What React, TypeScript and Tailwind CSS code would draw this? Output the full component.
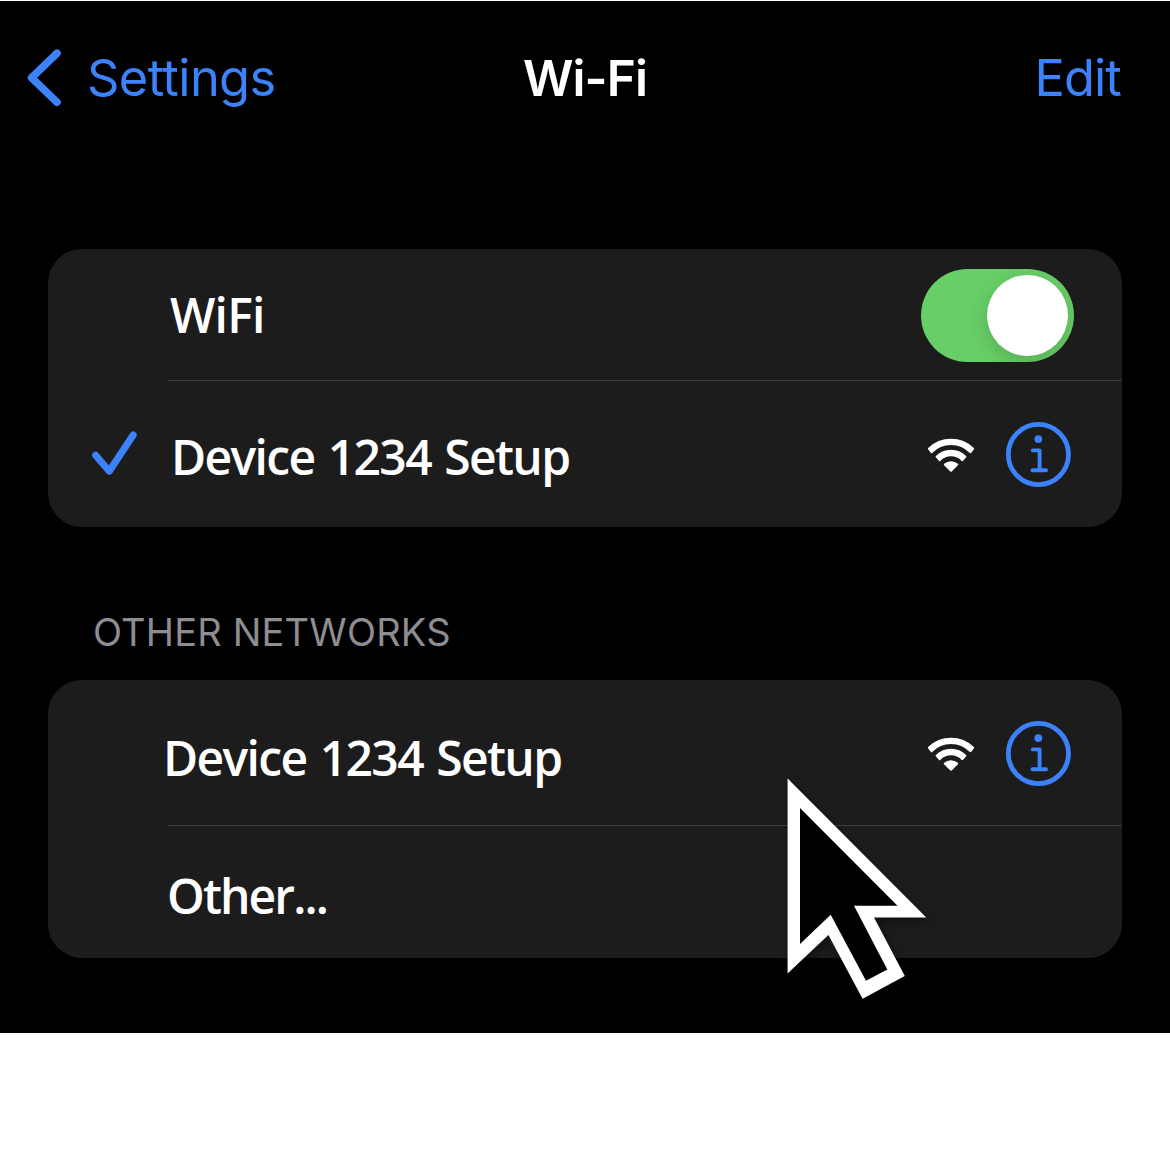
import React from "react";

const labelFont = "font-['Open_Sans','Noto_Sans',sans-serif] font-semibold text-white whitespace-nowrap";
const uiFont = "font-['Inter',sans-serif]";

function ChevronLeft() {
  return (
    <svg className="block h-[60px] w-[36px] shrink-0" viewBox="0 0 36 60" fill="none">
      <path d="M31 5.2 L5.6 29.8 L31 54.2" stroke="#3b82fb" strokeWidth="7.6" strokeLinecap="round" strokeLinejoin="round" />
    </svg>
  );
}

function Check() {
  return (
    <svg className="block h-[46px] w-[46px] shrink-0" viewBox="0 0 46 46" fill="none">
      <path d="M3.6 24.2 L17.3 40.2 L41.2 4" stroke="#3b82fb" strokeWidth="7" strokeLinecap="round" strokeLinejoin="round" />
    </svg>
  );
}

function Wifi() {
  return (
    <svg className="block h-[36px] w-[48px] shrink-0" viewBox="-24 -35.6 48 36">
      <g fill="#fff" stroke="#fff" strokeWidth="2" strokeLinejoin="round">
        <path d="M-22.2 -23 A32 32 0 0 1 22.2 -23 L19.5 -19.4 A27.2 27.2 0 0 0 -19.5 -19.4 Z" />
        <path d="M-14.4 -15 A20.6 20.6 0 0 1 14.4 -15 L11.4 -11.4 A15.8 15.8 0 0 0 -11.4 -11.4 Z" />
        <path d="M-6.2 -7 A9.2 9.2 0 0 1 6.2 -7 L0 -0.8 Z" />
      </g>
    </svg>
  );
}

function Info() {
  return (
    <svg className="block h-[66px] w-[66px] shrink-0" viewBox="0 0 66 66" fill="none">
      <circle cx="33.4" cy="33.5" r="30.1" stroke="#3b82fb" strokeWidth="4.8" />
      <circle cx="33.3" cy="18.1" r="3.9" fill="#3b82fb" />
      <path d="M27.8 29.4 H34.6 V49.3 M27.5 49.3 H41" stroke="#3b82fb" strokeWidth="3.9" strokeLinecap="round" strokeLinejoin="round" />
    </svg>
  );
}

function Toggle() {
  return (
    <div className="mt-0.5 flex h-[93px] w-[153px] items-center justify-end overflow-hidden rounded-full bg-[#68ce67] pr-1.5">
      <div className="size-[81px] rounded-full bg-white shadow-[0_6px_20px_rgba(0,0,0,0.16)]" />
    </div>
  );
}

function Cursor() {
  return (
    <svg
      className="absolute top-[768px] left-[780px] h-[240px] w-[160px] drop-shadow-[3px_4px_4px_rgba(0,0,0,0.4)]"
      viewBox="780 769 160 240"
    >
      <path d="M787.6 778.5 L926.3 917.5 H874 L904.8 976 L862.6 998.8 L828.4 935 L787.6 973.6 Z" fill="#fff" />
      <path d="M800 808 L897.5 905.7 H854 L887.3 969.5 L866 980.8 L830.7 914.8 L800 944 Z" fill="#000" />
    </svg>
  );
}

export default function App() {
  return (
    <div className="h-[1170px] w-[1170px] overflow-hidden bg-white">
      <main className="relative h-[1033px] border-t border-white bg-black">
        <header className={"flex h-[248px] items-start justify-between pr-[48px] pl-[26px] pt-[47px] " + uiFont}>
          <div className="flex w-[290px] items-start text-[#3b82fb]">
            <ChevronLeft />
            <span className="ml-[25px] text-[50.5px] leading-[60px] tracking-[-0.6px]">Settings</span>
          </div>
          <h1 className="ml-[22px] text-[49.5px] leading-[60px] font-semibold tracking-[-0.9px] whitespace-nowrap text-white">Wi-Fi</h1>
          <div className="flex w-[290px] justify-end text-[#3b82fb]">
            <span className="mr-px text-[50.5px] leading-[60px] tracking-[-0.9px]">Edit</span>
          </div>
        </header>

        <section className="mx-12 h-[278px] rounded-[34px] bg-[#1c1c1c]">
          <div className="ml-[120px] flex h-[132px] items-center justify-between border-b border-[#3d3d3f] pr-12 pl-[2px]">
            <span className={"text-[48px] leading-[60px] tracking-[-0.8px] " + labelFont}>WiFi</span>
            <Toggle />
          </div>
          <div className="flex h-[146px] items-center pr-[51px] pl-[44px]">
            <Check />
            <span className={"ml-[33px] flex-1 pt-1.5 text-[48px] leading-[60px] tracking-[-1.65px] [word-spacing:2.5px] " + labelFont}>
              Device 1234 Setup
            </span>
            <Wifi />
            <div className="ml-[30px]">
              <Info />
            </div>
          </div>
        </section>

        <h2 className={"flex h-[153px] items-end pb-[23px] pl-[93px] text-[38px] leading-[50px] tracking-[0.18px] text-[#8d8d92] " + uiFont}>
          OTHER NETWORKS
        </h2>

        <section className="mx-12 h-[278px] rounded-[34px] bg-[#1c1c1c]">
          <div className="ml-[120px] flex h-[146px] items-center border-b border-[#3d3d3f] pr-[51px]">
            <span className={"-ml-[5px] flex-1 pt-2.5 text-[48px] leading-[60px] tracking-[-1.65px] [word-spacing:2.5px] " + labelFont}>
              Device 1234 Setup
            </span>
            <Wifi />
            <div className="ml-[30px]">
              <Info />
            </div>
          </div>
          <div className="ml-[119px] flex h-[132px] items-center">
            <span className={"pt-2 text-[48px] leading-[60px] tracking-[-1.9px] " + labelFont}>Other...</span>
          </div>
        </section>

        <Cursor />
      </main>
    </div>
  );
}
